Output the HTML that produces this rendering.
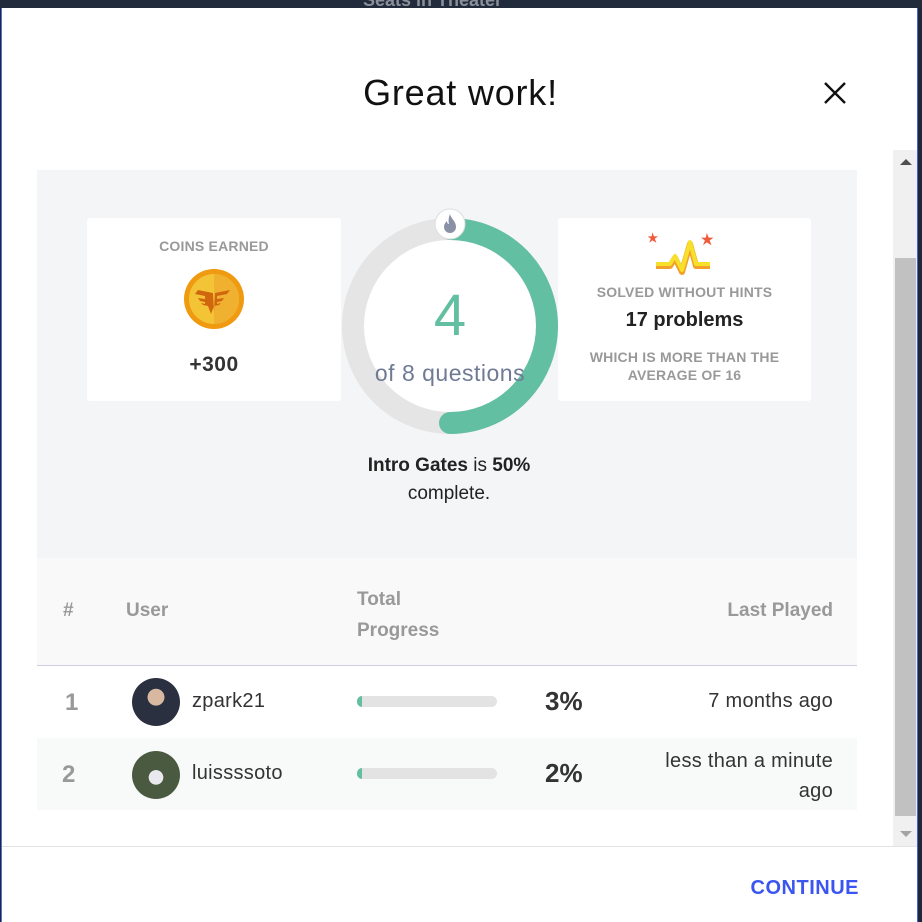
<!DOCTYPE html>
<html><head><meta charset="utf-8"><style>
*{margin:0;padding:0;box-sizing:border-box}
body{width:922px;height:922px;overflow:hidden;background:#1f2838;font-family:"Liberation Sans",sans-serif;position:relative}
.top{position:absolute;left:0;top:0;width:922px;height:8px;background:#222b3b;overflow:hidden}
.top span{position:absolute;left:363px;top:-10px;color:#8a8f99;font-size:18px;font-weight:bold}
.modal{position:absolute;left:1px;top:8px;width:917px;height:914px;background:#fff;border-left:1px solid #5b6fd6;border-right:1px solid #4a5ee0}
.abs{position:absolute}
h1{position:absolute;left:0;width:917px;top:64px;text-align:center;font-weight:normal;font-size:36px;color:#111;letter-spacing:0.8px}
.gray{position:absolute;left:35px;top:162px;width:820px;height:388px;background:#f4f5f7}
.card{position:absolute;background:#fff;border-radius:3px;text-align:center}
.lbl{font-size:14px;font-weight:bold;color:#999;letter-spacing:0.2px}
.tbl{position:absolute;left:35px;top:550px;width:820px}
.th{color:#999;font-weight:bold;font-size:19px}
.bar{position:absolute;width:140px;height:11px;background:#e3e3e3;border-radius:6px}
.bar i{position:absolute;left:0;top:0;width:5px;height:11px;background:#63bfa2;border-radius:6px 0 0 6px}
.av{position:absolute;width:48px;height:48px;border-radius:50%}
.row{font-size:20px;color:#333;letter-spacing:0.3px}
</style></head><body>
<div class="top"><span>Seats in Theater</span></div>
<div class="modal">
<h1>Great work!</h1>
<svg class="abs" style="left:820px;top:72px" width="26" height="26"><path d="M3 3L23 23M23 3L3 23" stroke="#111" stroke-width="2.4"/></svg>
<div class="gray">
 <div class="card" style="left:50px;top:48px;width:254px;height:183px">
  <div class="lbl" style="margin-top:20px">COINS EARNED</div>
  <svg style="margin-top:14px" width="62" height="62" viewBox="0 0 62 62"><circle cx="31" cy="31" r="30" fill="#ef9a10"/><circle cx="31" cy="31" r="25" fill="#f3c536"/><path d="M31 6a25 25 0 0 1 0 50z" fill="#f0b030"/><path d="M15 22l15 3 1 19 1-19 15-3-3 4-10 2v3l7-1-2 3-5 1v2l4-1-2 2-5 1-3 8-3-8-5-1-2-2 4 1v-2l-5-1-2-3 7 1v-3l-10-2z" fill="#d0670e"/></svg>
  <div style="font-size:21px;font-weight:bold;color:#333;margin-top:18px;letter-spacing:0.5px">+300</div>
 </div>
 <svg class="abs" style="left:304px;top:38px" width="220" height="230">
  <circle cx="109" cy="118" r="97" fill="#fff" stroke="#e5e5e5" stroke-width="22"/>
  <path d="M109 21A97 97 0 0 1 109 215" fill="none" stroke="#63bfa2" stroke-width="22" stroke-linecap="round"/>
  <circle cx="109" cy="16" r="15" fill="#fff" stroke="#ddd" stroke-width="1"/>
  <path d="M109 6c1 5 6 7 6 13a6 6 0 0 1-12 0c0-3 2-5 3-6 0 2 1 3 2 3-1-4 0-7 1-10z" fill="#8891a6"/>
  <text x="109" y="127" text-anchor="middle" font-size="58" font-family="Liberation Sans" fill="#63bfa2">4</text>
  <text x="109" y="173" text-anchor="middle" font-size="23" font-family="Liberation Sans" fill="#6f7a94" letter-spacing="0.5">of 8 questions</text>
 </svg>
 <div class="abs" style="left:302px;top:282px;width:220px;text-align:center;font-size:19px;color:#222;line-height:28px"><b>Intro Gates</b> is <b>50%</b><br>complete.</div>
 <div class="card" style="left:521px;top:48px;width:253px;height:183px">
  <svg style="position:absolute;left:88px;top:12px" width="80" height="50"><path d="M8 3l2 5 5 0-4 3 2 5-5-3-4 3 2-5-4-3 5 0z" fill="#ef5a3a" transform="scale(0.8)"/><path d="M64 3l2 5 5 0-4 3 2 5-5-3-4 3 2-5-4-3 5 0z" fill="#ef5a3a" transform="scale(0.95)"/><path d="M10 36h14l5-8 7 14 8-28 6 22h14" fill="none" stroke="#f2a028" stroke-width="6" stroke-linejoin="round"/><path d="M10 34h14l5-8 7 14 8-28 6 22h14" fill="none" stroke="#f6e02a" stroke-width="4" stroke-linejoin="round"/></svg>
  <div class="lbl" style="position:absolute;top:66px;width:100%">SOLVED WITHOUT HINTS</div>
  <div style="position:absolute;top:91px;width:100%;font-size:20px;font-weight:bold;color:#222">17 problems</div>
  <div class="lbl" style="position:absolute;top:130px;width:100%;line-height:18px">WHICH IS MORE THAN THE<br>AVERAGE OF 16</div>
 </div>
</div>
<div class="tbl">
 <div class="abs" style="left:0;top:0;width:820px;height:108px;background:#f9f9f9;border-bottom:1px solid #cfcde3"></div>
 <div class="abs th" style="left:26px;top:42px">#</div>
 <div class="abs th" style="left:89px;top:42px">User</div>
 <div class="abs th" style="left:320px;top:26px;line-height:31px">Total<br>Progress</div>
 <div class="abs th" style="right:24px;top:42px">Last Played</div>
 <div class="abs th" style="left:28px;top:131px;font-size:24px">1</div>
 <div class="av" style="left:95px;top:120px;background:radial-gradient(circle at 50% 40%,#d8b8a0 0 22%,#2a3040 23% 100%)"></div>
 <div class="abs row" style="left:155px;top:132px">zpark21</div>
 <div class="bar" style="left:320px;top:138px"><i></i></div>
 <div class="abs" style="left:508px;top:128px;font-size:26px;font-weight:bold;color:#333">3%</div>
 <div class="abs row" style="right:24px;top:132px">7 months ago</div>
 <div class="abs" style="left:0;top:180px;width:820px;height:72px;background:#f8f9f9"></div>
 <div class="abs th" style="left:25px;top:203px;font-size:24px">2</div>
 <div class="av" style="left:95px;top:193px;background:radial-gradient(circle at 50% 55%,#e8e8ee 0 20%,#4a5a40 21% 100%)"></div>
 <div class="abs row" style="left:155px;top:204px">luissssoto</div>
 <div class="bar" style="left:320px;top:210px"><i></i></div>
 <div class="abs" style="left:508px;top:200px;font-size:26px;font-weight:bold;color:#333">2%</div>
 <div class="abs row" style="right:24px;top:188px;text-align:right;line-height:30px">less than a minute<br>ago</div>
</div>
<div class="abs" style="left:0;top:838px;width:915px;height:1px;background:#e3e3e3"></div>
<div class="abs" style="right:58px;top:869px;font-size:20px;font-weight:bold;color:#3a55f0;letter-spacing:0.5px">CONTINUE</div>
<div class="abs" style="left:891px;top:142px;width:24px;height:696px;background:#f0f0f0"></div>
<div class="abs" style="left:893px;top:250px;width:21px;height:558px;background:#c1c1c1"></div>
<div class="abs" style="left:898px;top:151px;width:0;height:0;border-left:6px solid transparent;border-right:6px solid transparent;border-bottom:6px solid #505050"></div>
<div class="abs" style="left:898px;top:823px;width:0;height:0;border-left:6px solid transparent;border-right:6px solid transparent;border-top:6px solid #a3a3a3"></div>
</div>
</body></html>
